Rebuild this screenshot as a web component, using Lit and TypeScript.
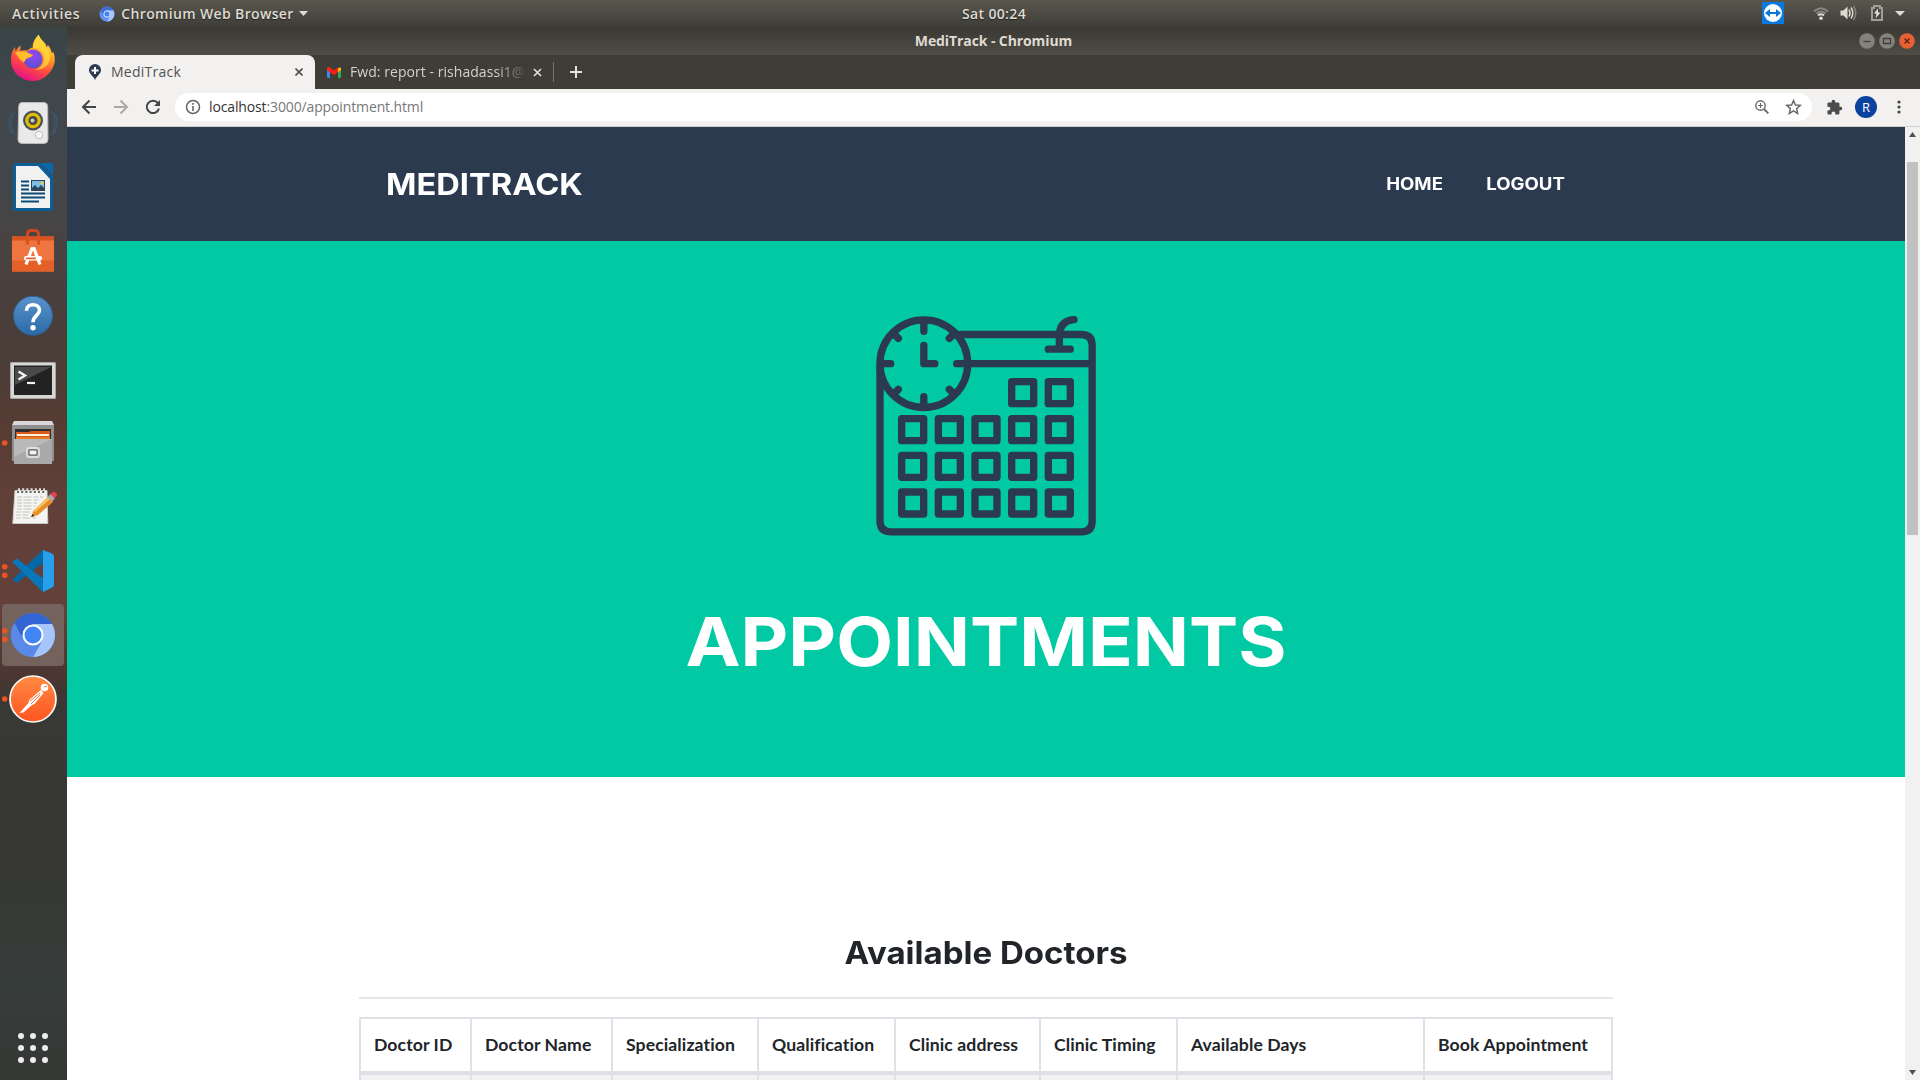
import { LitElement, html, css, svg } from "lit";
import { customElement } from "lit/decorators.js";

const NAVY = "#2c3a50";

const dockArt = [
  // Firefox
  svg`<defs>
      <linearGradient id="ff" x1="0.8" y1="0" x2="0.35" y2="1"><stop offset="0" stop-color="#fff04a"/><stop offset=".35" stop-color="#ffab25"/><stop offset=".68" stop-color="#ff4a3e"/><stop offset="1" stop-color="#e5108c"/></linearGradient>
      <radialGradient id="fp" cx=".5" cy=".3" r=".7"><stop offset="0" stop-color="#9a45f2"/><stop offset="1" stop-color="#5a4fd0"/></radialGradient>
    </defs>
    <path fill="url(#ff)" d="M11 33c0-6 1.500-9.500 4-13l.5 4.500c1.500-3 3.500-5 5-6l-.2 5.500c2.500-1 5-1 7.500-.5 1.500-2 3-2.600 5-3-.5-5.500 3-10 6-13 1 4.500 4.500 6 7 10l1 3 1-2.500c2 2 3.500 5 4 8l1.500-1c2.500 6 1.800 12-1.500 17.500C47 50 40.500 54 33.500 54 21 54 11 45 11 33z"/>
    <circle cx="33" cy="32" r="9.500" fill="url(#fp)"/>
    <path fill="#ffbd2e" d="M15 25c5-1 11-.5 14 1 1 1 3 1.500 4 2-1 2-4 2.500-6 3.500-2 1-2 3-3 4-2-2-5-3-6-6z"/>
    <path fill="#ffd93b" opacity=".75" d="M33 21c7 0 11 5 11 10 0 6-4 11-10 12 9 1 16-5 16-13 0-9-8-13-11-21-4 4-6 8-6 12z"/>`,
  // Rhythmbox
  svg`<g fill="none" stroke="#3f5f83" stroke-width="1.500" opacity=".6"><path d="M15 20c-5 6-5 18 0 24M11.500 22c-3.500 6-3.500 14 0 20M51 20c5 6 5 18 0 24M54.500 22c3.500 6 3.500 14 0 20"/></g>
    <path fill="#e9e9e9" stroke="#b9b9b9" d="M22 11.500h22q3.500 0 3.700 4l.3 33q0 4-4 4h-22q-4 0-4-4l.7-33q0-4 3.300-4z"/>
    <circle cx="33" cy="29.500" r="10" fill="#47505c"/><circle cx="33" cy="29.500" r="7.800" fill="#e0bd08"/><circle cx="33" cy="29.500" r="4.500" fill="#4a4a42"/><circle cx="32.500" cy="29.500" r="2" fill="#c6ccd2"/>
    <circle cx="39" cy="44" r="3.800" fill="#f5f5f5" stroke="#c0c0c0"/>`,
  // Writer
  svg`<path fill="#0d5e97" d="M16 8h24l13 13v32q0 3-3 3H16q-3 0-3-3V11q0-3 3-3z"/>
    <path fill="#0669ab" d="M41 8h10q2 0 2 2v10z"/><path fill="#f1f1f1" d="M16 11h22l12 13v29H16z"/>
    <g stroke="#0a4a77" stroke-width="2"><path d="M21 26.500h8M21 30.500h8M21 34.500h8M21 38.500h24M21 42.500h24M21 46.500h18"/></g>
    <path fill="#2c4558" d="M31 25h14v11H31z"/><path fill="#7cc0e8" d="M32 26h12v7l-3-3-3 3-3-3-3 3z"/><circle cx="42" cy="28" r="1.500" fill="#f2c844"/>`,
  // Software
  svg`<g transform="translate(0 3.500)"><path fill="none" stroke="#c9481f" stroke-width="3" d="M27.500 19v-7q0-4 3-4h5q3 0 3 4v7"/>
    <path fill="#ee7440" d="M12 14h42v35H12z"/><path fill="#d9531f" d="M12 14h42v4H12z"/><path fill="#e46027" d="M12 38h42v11H12z"/>
    <path fill="none" stroke="#d9531f" stroke-width="3" d="M27.500 22v-8M38.500 22v-8"/>
    <path fill="none" stroke="#fff" stroke-width="3.200" d="M26 42l6-16h2l6 16"/><rect x="24" y="33.500" width="18" height="4.500" rx="2" fill="#fff"/><rect x="26" y="35" width="10" height="1.800" fill="#e8642e"/></g>`,
  // Help
  svg`<defs><linearGradient id="hp" x1="0" y1="0" x2="0" y2="1"><stop offset="0" stop-color="#5b93cb"/><stop offset="1" stop-color="#2a6aa8"/></linearGradient></defs>
    <g transform="translate(0 .7)"><circle cx="33" cy="32" r="19.500" fill="url(#hp)" stroke="#2c629b"/>
    <path fill="none" stroke="#fff" stroke-width="3.600" d="M26.500 27c0-4 3-6 6.500-6s6.500 2 6.500 5.500c0 5-6.500 5.500-6.500 12"/><circle cx="33" cy="44" r="2.700" fill="#fff"/></g>`,
  // Terminal
  svg`<rect x="10" y="15" width="46" height="37" rx="1.500" fill="#a5a5a5"/><rect x="11" y="16" width="44" height="35" fill="#d6d6d6"/><rect x="14" y="18.500" width="38" height="29.500" fill="#222"/>
    <path fill="#4a4a4a" d="M15 20h36L15 38z"/><path fill="none" stroke="#f3f3f3" stroke-width="2.400" d="M18.500 24.500l6.500 4-6.500 4"/><path stroke="#f3f3f3" stroke-width="2.200" d="M27 36h8"/>`,
  // Files
  svg`<path fill="#d9d5d8" d="M14 10h38l2 4v6H12v-6z"/><path fill="#8f8f8f" d="M12 14h42v36H12z"/><path fill="#303030" d="M15 18h36v10H15z"/><path fill="#d85b1b" d="M16 21h13l2-1h19v8H16z"/><path fill="#fff3df" d="M17 23h32v2H17z"/><path fill="#e87b25" d="M16 26h34v3H16z"/>
    <path fill="#a9a9a9" d="M14 28h38v25H14z"/><path fill="#cacaca" d="M14 28h38L14 46z" opacity=".5"/><rect x="27" y="37" width="12" height="9" rx="2" fill="#a5a5a5" stroke="#dedede" stroke-width="1.800"/><path fill="#f3f3f3" stroke="#555" d="M29 39h8v5h-8z"/>`,
  // Text editor
  svg`<path fill="#f4f4f1" stroke="#c9c9c4" d="M15 15.500h32l.8 33H12.800z"/><path fill="none" stroke="#666" stroke-width="2.200" stroke-dasharray="2 2.200" d="M17 17h28"/><path fill="none" stroke="#ddd" stroke-width="2.600" stroke-dasharray="2 2.200" d="M18 14.500h27"/>
    <path fill="none" stroke="#c2c2c0" stroke-dasharray="5 1.500 8 2" d="M17 22h26M17 25h23M17 28h20M17 31h18M17 34h16M16 37h14M16 40h12M16 43h20"/>
    <path fill="#e98f28" d="M33 36l15-14 5 5-15 13-6 2z"/><path fill="#f9c163" d="M33 36l15-14 2 2-15 13z"/><path fill="#a9a9a9" d="M47.500 22l3-3 4.500 4-3 4z"/><path fill="#e4404d" d="M50.500 19q3-3.500 5.500-1t-1.500 5z"/><path fill="#222" d="M31 42l1.500-3 1.700 2z"/>`,
  // VS Code
  svg`<path fill="#0679be" d="M12.500 23l4-3.500L45 41v10.500q-1.500 1.500-3.500 0z"/><path fill="#0568a7" d="M12.500 40.500l4 3.500L45 22.500V12q-1.500-1.500-3.500 0z"/><path fill="#26a0ec" d="M43 11l9 3.500q2 1 2 3v28q0 2-2 3L43 53z"/><path fill="#0877ba" d="M12.500 23l4-3.500L43 40v13z"/>`,
  // Chromium
  svg`<circle cx="33" cy="32" r="22" fill="#5f8fec"/><path fill="#3364d3" d="M14.500 20A22 22 0 0 1 52 21H33l-12 13z"/><path fill="#a7c5fb" d="M33 21h19a22 22 0 0 1-19 33l9-16z"/><path fill="#5a8ae8" d="M14.500 20A22 22 0 0 0 33 54l8-14-16 0z"/><circle cx="33" cy="32" r="9.500" fill="#4285f4" stroke="#fff" stroke-width="2"/>`,
  // Postman
  svg`<defs><linearGradient id="pm" x1="0" y1="0" x2="0" y2="1"><stop offset="0" stop-color="#ff8b44"/><stop offset="1" stop-color="#ff5420"/></linearGradient></defs>
    <circle cx="33" cy="32" r="23" fill="url(#pm)" stroke="#fff" stroke-width="1.700"/><circle cx="44.500" cy="20.500" r="3.800" fill="#fff"/><path fill="#fff" d="M41 23l2.500 3-9 11-2.500 1-8.500 7.500-4 .5 8.500-9.500 1.500-4z"/><path stroke="#ff7137" d="M30 34l10-8M31 37l9-9M44 20l3-1" fill="none"/>`,
];

// Number of running-window dots beside each launcher.
const dockState = [0, 0, 0, 0, 0, 0, 1, 0, 2, 2, 1];

const columns = ["Doctor ID", "Doctor Name", "Specialization", "Qualification", "Clinic address", "Clinic Timing", "Available Days", "Book Appointment"];

const chromium = svg`<circle cx="8" cy="8" r="7.500" fill="#5f92ee"/><path fill="#3c6ddb" d="M1.500 4.500A7.500 7.500 0 0 1 14.500 4.500H8L4 9z"/><path fill="#a7c5fb" d="M8 4.500h6.500A7.500 7.500 0 0 1 8 15.500l3-5z"/><circle cx="8" cy="8" r="3.200" fill="#4285f4" stroke="#dce8ff"/>`;

// Day cells of the calendar illustration, by centre.
const boxes = [[518, 308], [628, 308], ...[419, 529, 639].flatMap((y) => [188, 298, 408, 518, 628].map((x) => [x, y]))];

@customElement("app-root")
export class AppRoot extends LitElement {
  static styles = css`
    :host { display: flex; flex-direction: column; width: 1920px; height: 1080px; overflow: hidden; background: #fff; font-family: "Open Sans", "Noto Sans", sans-serif; }
    * { box-sizing: border-box; }
    svg { display: block; flex: none; }
    .m { white-space: pre; }
    .topbar { height: 27px; flex: none; display: grid; grid-template-columns: 1fr auto 1fr; align-items: center; background: linear-gradient(#5a574e, #3e3d38); color: #dfdbd2; font-size: 14px; font-weight: 600; line-height: 20px; text-shadow: 0 1px 1px #222; padding-left: 12px; }
    .left { display: flex; align-items: center; }
    .act { letter-spacing: 0.7px; }
    .app { letter-spacing: 0.35px; }
    .clock { padding-left: 56px; letter-spacing: 0.35px; }
    .left .chr { margin: 0 6px 0 19px; }
    .left .arr { margin-left: 5px; }
    .tray { display: flex; align-items: center; justify-content: flex-end; padding-right: 15px; }
    .body { flex: 1; min-height: 0; display: flex; }
    .dock { width: 67px; flex: none; display: flex; flex-direction: column; background: linear-gradient(180deg, #394447 0, #40474a 60px, #42464a 160px, #494341 220px, #4b3c37 330px, #573c34 400px, #62403a 480px, #63403a 590px, #4a3631 650px, #383834 680px, #363833 860px, #373d3c 960px, #353733 1053px); }
    .slot { height: 64px; flex: none; display: grid; grid-template-columns: 67px; position: relative; }
    .slot.on::before { content: ""; grid-area: 1 / 1; margin: 1px 3px 1px 2px; border-radius: 4px; background: #74625c; }
    .slot svg { grid-area: 1 / 1; position: relative; }
    .apps { margin-top: auto; margin-left: 18px; margin-bottom: 17px; }
    .win { flex: 1; min-width: 0; display: flex; flex-direction: column; }
    .title { height: 28px; flex: none; display: grid; grid-template-columns: 1fr auto 1fr; align-items: center; background: linear-gradient(#3a3833, #504d46); color: #dfdbd2; font-size: 14px; font-weight: 700; line-height: 20px; letter-spacing: -0.1px; }
    .title .m { grid-column: 2; }
    .btns { display: flex; gap: 4px; justify-content: flex-end; padding-right: 5px; }
    .tabs { height: 34px; flex: none; display: flex; background: #3e3e37; font-size: 14px; line-height: 20px; }
    .tab { display: flex; align-items: center; height: 34px; flex: none; }
    .tab.active { width: 240px; margin-left: 8px; padding: 0 12px 0 14px; background: #f2f1f0; color: #53534f; border-radius: 8px 8px 0 0; }
    .tab.active .m { margin-left: 10px; flex: 1; letter-spacing: 0.25px; }
    .tab.other { width: 238px; padding: 0 11px 0 12px; color: #d3d2ca; }
    .fade { margin-left: 9px; width: 177px; flex: none; overflow: hidden; letter-spacing: 0.05px; mask-image: linear-gradient(90deg, #000 145px, transparent 178px); }
    .other .x { margin-left: 6px; }
    .sep { width: 1px; height: 20px; background: #75746c; align-self: center; }
    .plus { margin: 11px 0 0 16px; }
    .toolbar { height: 38px; flex: none; display: flex; align-items: center; background: #f2f1f0; border-bottom: 1px solid #cfcfcd; padding: 0 0 1px 14px; }
    .toolbar .b + .b { margin-left: 16px; }
    .omni { margin-left: 14px; width: 1637px; height: 28px; flex: none; border-radius: 14px; background: #fff; display: flex; align-items: center; padding: 0 4px 0 10px; font-size: 14px; line-height: 20px; color: #777; }
    .omni .url { margin-left: 8px; flex: 1; letter-spacing: -0.13px; }
    .omni b { font-weight: 400; color: #333; }
    .ext { margin-left: 14px; }
    .avatar { width: 22px; height: 22px; border-radius: 50%; background: #0b429d; color: #fff; display: grid; place-items: center; font-size: 13px; line-height: 22px; margin-left: 12px; }
    .more { margin-left: 20px; }
    .view { flex: 1; min-height: 0; display: flex; }
    .page { width: 1838px; flex: none; display: flex; flex-direction: column; overflow: hidden; }
    .nav { height: 114px; flex: none; background: #2c3a50; display: flex; align-items: center; justify-content: space-between; padding: 0 340px 0 319px; color: #fff; font-family: Inter, sans-serif; font-weight: 700; }
    .brand { font-size: 30px; line-height: 40px; transform: scaleX(1.088); transform-origin: left; }
    .links { display: flex; gap: 50px; font-size: 17px; line-height: 24px; }
    .links .m { transform: scaleX(1.093); transform-origin: right; }
    .hero { height: 536px; flex: none; background: #00c9a3; display: flex; flex-direction: column; align-items: center; padding-top: 75px; }
    .hero .m { margin-top: 63px; color: #fff; font: 700 68px/84px Inter, sans-serif; transform: scaleX(1.085); }
    .doctors { width: 1254px; margin: 152px auto 0; display: flex; flex-direction: column; flex: none; color: #212529; }
    .doctors .h { text-align: center; font: 700 31px/48px Inter, sans-serif; transform: scaleX(1.066); }
    .hr { height: 2px; background: #e5e5e5; margin: 20px 0 18px; }
    .grid { display: grid; grid-template-columns: 111px 141px 146px 137px 145px 137px 247px 190px; background: #f2f2f2; border-top: 2px solid #dee2e6; }
    .th { height: 56px; border-left: 2px solid #dee2e6; border-bottom: 4px solid #dee0e5; background: #fff; font: 700 17.6px/26px Lato, sans-serif; letter-spacing: 0.1px; padding: 13px 0 0 13px; }
    .td { height: 20px; border-left: 2px solid #dee2e6; }
    .th:nth-child(8n), .td:nth-child(8n) { border-right: 2px solid #dee2e6; }
    .bar { flex: 1; background: #f1f1f1; display: flex; flex-direction: column; align-items: center; }
    .bar svg { margin-top: 5px; }
    .thumb { width: 11px; height: 373px; background: #c1c1c1; margin-top: 25px; }
    .bar .dn { margin-top: auto; margin-bottom: 5px; }
  `;

  render() {
    return html`
      <div class="topbar">
        <div class="left"><span class="m act">Activities</span>
          <svg class="chr" width="16" height="16" viewBox="0 0 16 16">${chromium}</svg>
          <span class="m app">Chromium Web Browser</span>
          <svg class="arr" width="9" height="5" viewBox="0 0 9 5"><path fill="#dfdbd2" d="M0 0h9L4.500 5z"/></svg></div>
        <span class="m clock">Sat 00:24</span>
        <div class="tray">
          <svg width="144" height="27" viewBox="0 0 144 27">
            <rect x="1" y="2" width="22" height="22" fill="#0b7ae0"/><circle cx="12" cy="13" r="9" fill="#fff"/><path fill="#0b75d8" d="M4 13l5-4v3h6V9l5 4-5 4v-3H9v3z"/>
            <g fill="none" stroke="#8a877f" stroke-width="2"><path d="M53 11.500q7-6.500 14 0M55.500 13.500q4.500-4 9 0"/></g><path fill="none" stroke="#dfdbd2" stroke-width="1.800" d="M57 15.500q3-2.500 6 0"/><circle cx="60" cy="18.300" r="1.800" fill="#dfdbd2"/>
            <path fill="#dfdbd2" d="M79.500 10.500h3l4-4v13l-4-4h-3z"/><path fill="none" stroke="#dfdbd2" stroke-width="1.500" d="M88 9.500q2 3.500 0 7M90 7.500q3.500 5.500 0 11"/><path fill="none" stroke="#85827a" stroke-width="1.500" d="M92.500 6q4.500 7 0 14"/>
            <path fill="none" stroke="#a19e96" stroke-width="2" d="M111 8h2V6h6v2h2v12h-10z"/><path fill="#e6e2d9" d="M117 8.500l-4 5h2.500l-1 5 5-6H117z"/>
            <path fill="#dfdbd2" d="M134 11h10l-5 5z"/>
          </svg>
        </div>
      </div>
      <div class="body">
        <div class="dock">
          ${dockArt.map((art, i) => html`<div class="slot ${i === 9 ? "on" : ""}"><svg width="67" height="64" viewBox="0 0 67 64">${art}
            ${dockState[i] === 1 ? svg`<circle cx="4.700" cy="32" r="2.800" fill="#e95420"/>` : ""}
            ${dockState[i] === 2 ? svg`<circle cx="4.700" cy="27.700" r="2.800" fill="#e95420"/><circle cx="4.700" cy="36.200" r="2.800" fill="#e95420"/>` : ""}</svg></div>`)}
          <svg class="apps" width="30" height="30" viewBox="0 0 30 30" fill="#eee">${[3, 15, 27].map((y) => [3, 15, 27].map((x) => svg`<circle cx=${x} cy=${y} r="3"/>`))}</svg>
        </div>
        <div class="win">
          <div class="title"><span class="m">MediTrack - Chromium</span>
            <div class="btns">
              ${["M4.500 8.500h7", "M4.500 5.500h7v5h-7z", "M5.500 5.500l5 5M10.500 5.500l-5 5"].map((d, i) => html`<svg width="16" height="16" viewBox="0 0 16 16"><circle cx="8" cy="8" r="7.800" fill=${i === 2 ? "#ea6035" : "#85827b"}/><path d=${d} fill="none" stroke=${i === 2 ? "#5a2411" : "#3f3e39"} stroke-width="1.300"/></svg>`)}
            </div>
          </div>
          <div class="tabs">
            <div class="tab active">
              <svg width="12" height="16" viewBox="0 0 12 16"><path fill=${NAVY} d="M6 0a6 6 0 0 1 6 6c0 4-4.500 6-6 10C4.500 12 0 10 0 6a6 6 0 0 1 6-6z"/><path stroke="#fff" stroke-width="2" d="M6 3v7M2.500 6.500h7"/></svg>
              <span class="m">MediTrack</span>
              <svg class="x" width="8" height="8" viewBox="0 0 8 8"><path stroke="#4e4e4a" stroke-width="1.600" d="M.5.5l7 7M7.500.5l-7 7"/></svg>
            </div>
            <div class="tab other">
              <svg width="14" height="11" viewBox="0 0 14 11"><path fill="#4285f4" d="M0 2l3 2v7H1q-1 0-1-1z"/><path fill="#34a853" d="M14 2l-3 2v7h2q1 0 1-1z"/><path fill="#fbbc04" d="M11 1l3-.5V3l-3 2.500z"/><path fill="#ff1d12" d="M0 1q1-1.500 3-.5l4 3 4-3V5L7 8 0 3z"/></svg>
              <span class="fade"><span class="m">Fwd: report - rishadassi1@</span></span>
              <svg class="x" width="9" height="9" viewBox="0 0 9 9"><path stroke="#dddcd5" stroke-width="1.700" d="M1 1l7 7M8 1l-7 7"/></svg>
            </div>
            <div class="sep"></div>
            <svg class="plus" width="12" height="12" viewBox="0 0 12 12"><path stroke="#e4e3dc" stroke-width="2" d="M6 0v12M0 6h12"/></svg>
          </div>
          <div class="toolbar">
            <svg class="b" width="16" height="16" viewBox="0 0 16 16" fill="none" stroke="#444" stroke-width="2"><path d="M15 8H2.500M8.500 1.500L2 8l6.500 6.500"/></svg>
            <svg class="b" width="16" height="16" viewBox="0 0 16 16" fill="none" stroke="#aaa9a8" stroke-width="2"><path d="M1 8h12.500M7.500 1.500L14 8l-6.500 6.500"/></svg>
            <svg class="b" width="16" height="16" viewBox="0 0 16 16"><path fill="none" stroke="#444" stroke-width="2" d="M13 4.200A6.200 6.200 0 1 0 14 9.500"/><path fill="#444" d="M15 1v6H9z"/></svg>
            <div class="omni">
              <svg width="16" height="16" viewBox="0 0 16 16"><circle cx="8" cy="8" r="6.500" fill="none" stroke="#666" stroke-width="1.500"/><path stroke="#666" stroke-width="1.600" d="M8 7v5M8 4v1.800"/></svg>
              <span class="m url"><b>localhost</b>:3000/appointment.html</span>
              <svg width="58" height="18" viewBox="0 0 58 18" fill="none" stroke="#666"><circle cx="10.500" cy="7.500" r="4.700" stroke-width="1.400"/><path stroke-width="1.800" d="M14 11l4.300 4.300"/><path stroke-width="1.100" d="M10.500 5v5M8 7.500h5"/><path stroke-width="1.400" d="M43.500 2.500l1.900 4.500 4.900.4-3.700 3.200 1.100 4.800-4.200-2.600-4.200 2.600 1.100-4.800-3.700-3.200 4.900-.4z"/></svg>
            </div>
            <svg class="ext" width="17" height="17" viewBox="0 0 24 24"><path fill="#4c4c4c" d="M20.500 11H19V7a2 2 0 0 0-2-2h-4V3.500a2.500 2.500 0 0 0-5 0V5H4a2 2 0 0 0-2 2v3.800h1.500a2.700 2.700 0 0 1 0 5.400H2V20a2 2 0 0 0 2 2h3.800v-1.500a2.700 2.700 0 0 1 5.400 0V22H17a2 2 0 0 0 2-2v-4h1.500a2.500 2.500 0 0 0 0-5z"/></svg>
            <div class="avatar">R</div>
            <svg class="more" width="4" height="14" viewBox="0 0 4 14" fill="#444"><circle cx="2" cy="2" r="1.600"/><circle cx="2" cy="7" r="1.600"/><circle cx="2" cy="12" r="1.600"/></svg>
          </div>
          <div class="view">
            <div class="page">
              <div class="nav"><span class="m brand">MEDITRACK</span><div class="links"><span class="m">HOME</span><span class="m">LOGOUT</span></div></div>
              <div class="hero">
                <svg width="220" height="220" viewBox="78 78 660 660" fill="none" stroke=${NAVY} stroke-width="22" stroke-linecap="round" stroke-linejoin="round">
                  <circle cx="221.500" cy="221" r="131.500"/>
                  <path d="M330 133.500H694Q726.500 134 726.500 166V693Q726.500 725.500 694 725.500H123Q90 725.500 90 693V230M320 221H726"/>
                  <path d="M221.500 100v24M221.500 342v-22M100 221h22M133 133l12 12M310 133l-12 12M133 310l12-12M310 310l-12-12M221.500 166v55h33" />
                  <path d="M672 89Q628 92 628 140V177M595 177.500H661"/>
                  ${boxes.map(([x, y]) => svg`<rect x=${x - 33} y=${y - 33} width="66" height="66"/>`)}
                </svg>
                <span class="m">APPOINTMENTS</span>
              </div>
              <div class="doctors">
                <div class="h"><span class="m">Available Doctors</span></div>
                <div class="hr"></div>
                <div class="grid">${columns.map((c) => html`<div class="th"><span class="m">${c}</span></div>`)}${columns.map(() => html`<div class="td"></div>`)}</div>
              </div>
            </div>
            <div class="bar">
              <svg width="7" height="5" viewBox="0 0 7 5"><path fill="#505050" d="M0 5h7L3.500 0z"/></svg>
              <div class="thumb"></div>
              <svg class="dn" width="7" height="5" viewBox="0 0 7 5"><path fill="#505050" d="M0 0h7L3.500 5z"/></svg>
            </div>
          </div>
        </div>
      </div>
    `;
  }
}
